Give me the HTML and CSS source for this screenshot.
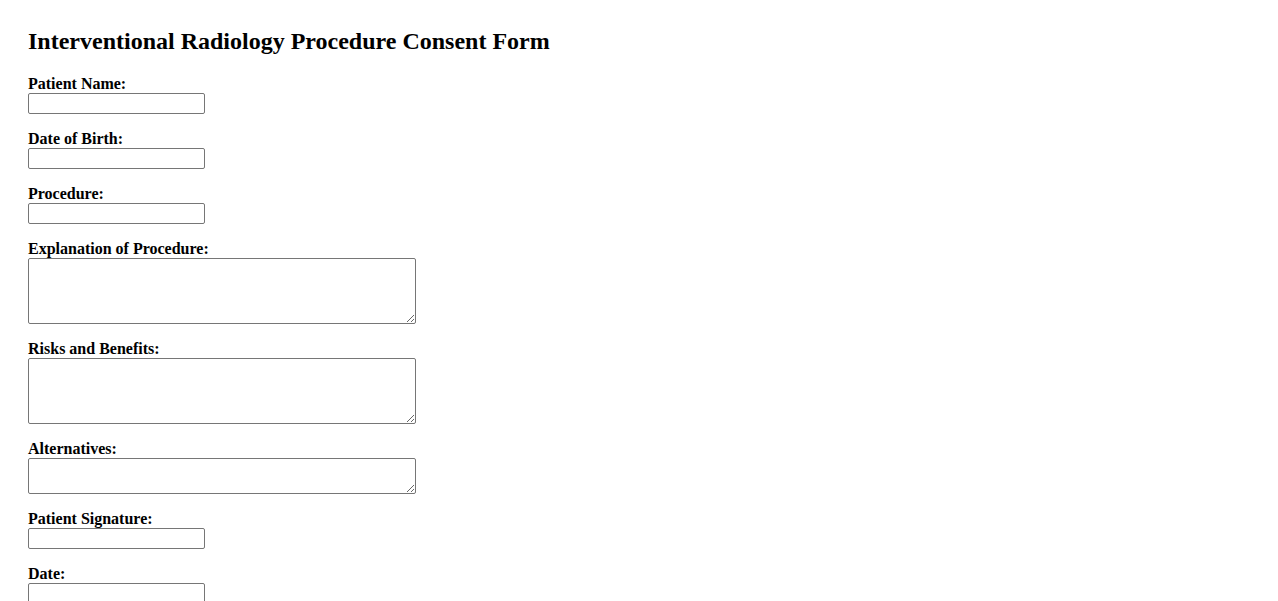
FILE: index.html
```html
<!DOCTYPE html>
<html>
<head>
<meta charset="utf-8">
<title>Interventional Radiology Procedure Consent Form</title>
<link rel="stylesheet" href="styles.css">
</head>
<body>
<h2 class="title">Interventional Radiology Procedure Consent Form</h2>
<form class="form">
  <div class="group">
    <label class="label" for="name">Patient Name:</label>
    <input class="field" type="text" id="name">
  </div>
  <div class="group">
    <label class="label" for="dob">Date of Birth:</label>
    <input class="field" type="text" id="dob">
  </div>
  <div class="group">
    <label class="label" for="proc">Procedure:</label>
    <input class="field" type="text" id="proc">
  </div>
  <div class="group">
    <label class="label" for="expl">Explanation of Procedure:</label>
    <textarea class="area area-tall" id="expl"></textarea>
  </div>
  <div class="group">
    <label class="label" for="risks">Risks and Benefits:</label>
    <textarea class="area area-tall" id="risks"></textarea>
  </div>
  <div class="group">
    <label class="label" for="alt">Alternatives:</label>
    <textarea class="area area-short" id="alt"></textarea>
  </div>
  <div class="group">
    <label class="label" for="sig">Patient Signature:</label>
    <input class="field" type="text" id="sig">
  </div>
  <div class="group">
    <label class="label" for="date">Date:</label>
    <input class="field" type="text" id="date">
  </div>
</form>
</body>
</html>
```

FILE: styles.css
```css
html, body {
  margin: 0;
  background: #fff;
}
body {
  padding: 27px 28px 28px;
  font-family: "Liberation Serif", "Times New Roman", serif;
  color: #000;
}
.title {
  margin: 0 0 20px;
  font-size: 24px;
  line-height: 28px;
  font-weight: bold;
}
.form {
  display: flex;
  flex-direction: column;
  gap: 16px;
}
.group {
  display: flex;
  flex-direction: column;
  align-items: flex-start;
}
.label {
  font-size: 16px;
  line-height: 18px;
  font-weight: bold;
}
.field, .area {
  box-sizing: border-box;
  border: 1px solid #767676;
  border-radius: 2px;
  background: #fff;
  margin: 0;
  padding: 1px 2px;
  font-family: "Liberation Mono", monospace;
  font-size: 13px;
}
.field {
  width: 177px;
  height: 21px;
}
.area {
  width: 388px;
  display: block;
}
.area-tall {
  height: 66px;
}
.area-short {
  height: 36px;
}
```
